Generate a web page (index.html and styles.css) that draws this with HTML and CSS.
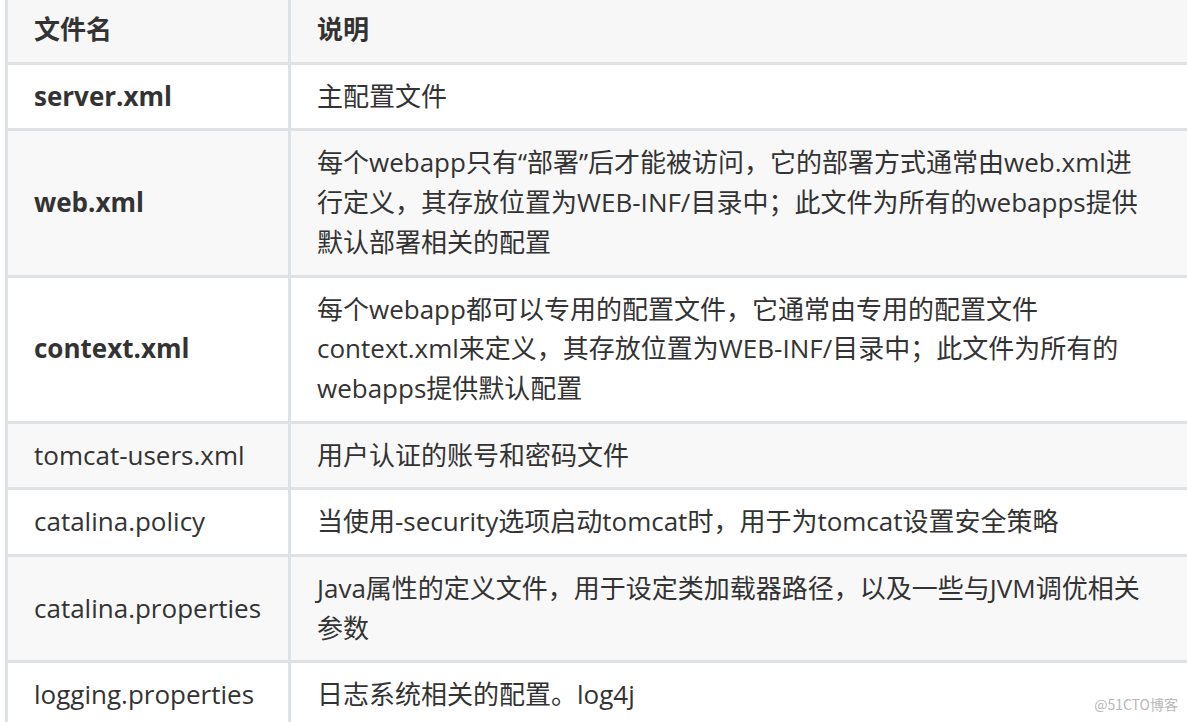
FILE: index.html
```html
<!DOCTYPE html>
<html lang="zh-CN">
<head>
<meta charset="utf-8">
<title>Tomcat 配置文件</title>
<link rel="stylesheet" href="styles.css">
</head>
<body>
<div class="page">
  <table class="conf-table">
    <thead>
      <tr>
        <th class="col-name">文件名</th>
        <th class="col-desc">说明</th>
      </tr>
    </thead>
    <tbody>
      <tr>
        <td class="strong">server.xml</td>
        <td>主配置文件</td>
      </tr>
      <tr class="alt">
        <td class="strong">web.xml</td>
        <td>每个webapp只有“部署”后才能被访问，它的部署方式通常由web.xml进<br>行定义，其存放位置为WEB-INF/目录中；此文件为所有的webapps提供<br>默认部署相关的配置</td>
      </tr>
      <tr>
        <td class="strong">context.xml</td>
        <td>每个webapp都可以专用的配置文件，它通常由专用的配置文件<br>context.xml来定义，其存放位置为WEB-INF/目录中；此文件为所有的<br>webapps提供默认配置</td>
      </tr>
      <tr class="alt">
        <td>tomcat-users.xml</td>
        <td>用户认证的账号和密码文件</td>
      </tr>
      <tr>
        <td>catalina.policy</td>
        <td>当使用-security选项启动tomcat时，用于为tomcat设置安全策略</td>
      </tr>
      <tr class="alt">
        <td>catalina.properties</td>
        <td>Java属性的定义文件，用于设定类加载器路径，以及一些与JVM调优相关<br>参数</td>
      </tr>
      <tr>
        <td>logging.properties</td>
        <td>日志系统相关的配置。log4j</td>
      </tr>
    </tbody>
  </table>
  <div class="watermark">@51CTO博客</div>
</div>
</body>
</html>
```

FILE: styles.css
```css
html, body {
  margin: 0;
  padding: 0;
  background: #ffffff;
}

.page {
  position: relative;
  width: 1187px;
  height: 722px;
  overflow: hidden;
}

.conf-table {
  border-collapse: collapse;
  margin: -5px 0 0 5px;
  width: 1188px;
  table-layout: fixed;
  font-family: "Open Sans", "Noto Sans CJK SC", sans-serif;
  font-size: 26px;
  line-height: 39.7px;
  color: #333333;
}

.conf-table th,
.conf-table td {
  border: 3px solid #dfe2e5;
  padding: 12px 26px;
  text-align: left;
  vertical-align: middle;
  white-space: nowrap;
}

.conf-table th {
  font-weight: 700;
  background: #f7f7f7;
}

.col-name {
  width: 228px;
}

.conf-table tbody tr {
  background: #ffffff;
}

.conf-table tbody tr.alt {
  background: #f8f8f8;
}

.strong {
  font-weight: 700;
}

.watermark {
  position: absolute;
  right: 9px;
  bottom: 8px;
  font-family: "Noto Sans CJK SC", "Liberation Sans", sans-serif;
  font-size: 14px;
  color: #b8b8b8;
}
```
